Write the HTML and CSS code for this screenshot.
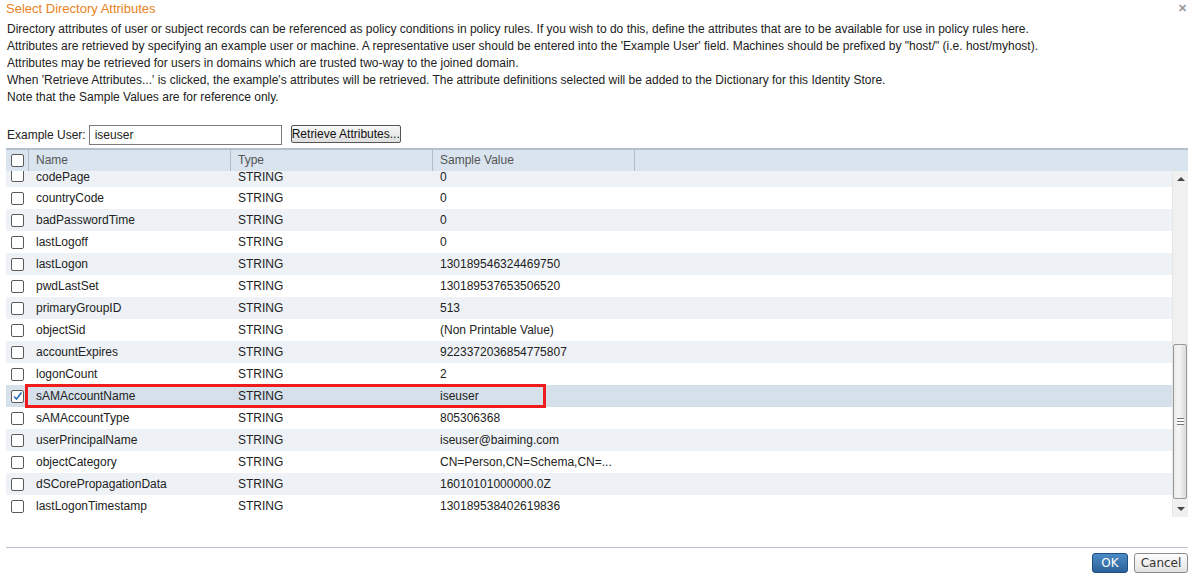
FILE: index.html
```html
<!DOCTYPE html>
<html lang="en">
<head>
	<meta charset="UTF-8">
	<title>Select Directory Attributes</title>
	<link rel="stylesheet" href="styles.css">
</head>
<body>
	<div class="dialog">
		<div class="title-bar">
			<span class="title">Select Directory Attributes</span>
			<span class="close">&#10005;</span>
		</div>

		<div class="desc">
			<p>Directory attributes of user or subject records can be referenced as policy conditions in policy rules. If you wish to do this, define the attributes that are to be available for use in policy rules here.</p>
			<p>Attributes are retrieved by specifying an example user or machine. A representative user should be entered into the 'Example User' field. Machines should be prefixed by "host/" (i.e. host/myhost).</p>
			<p>Attributes may be retrieved for users in domains which are trusted two-way to the joined domain.</p>
			<p>When 'Retrieve Attributes...' is clicked, the example's attributes will be retrieved. The attribute definitions selected will be added to the Dictionary for this Identity Store.</p>
			<p>Note that the Sample Values are for reference only.</p>
		</div>

		<div class="example">
			<span class="lbl">Example User:</span>
			<input class="user-input" type="text" value="iseuser">
			<button class="btn-retrieve">Retrieve Attributes...</button>
		</div>

		<div class="grid">
			<div class="grid-head">
				<div class="c c-chk"><span class="chk"></span></div>
				<div class="c c-name">Name</div>
				<div class="c c-type">Type</div>
				<div class="c c-val">Sample Value</div>
				<div class="c c-rest"></div>
			</div>
			<div class="grid-body">
				<div class="rows">
					<!-- list is scrolled a few px, first row shows cut -->
					<div class="row alt partial"><div class="c c-chk"><span class="chk"></span></div><div class="c c-name">codePage</div><div class="c c-type">STRING</div><div class="c c-val">0</div></div>
					<div class="row"><div class="c c-chk"><span class="chk"></span></div><div class="c c-name">countryCode</div><div class="c c-type">STRING</div><div class="c c-val">0</div></div>
					<div class="row alt"><div class="c c-chk"><span class="chk"></span></div><div class="c c-name">badPasswordTime</div><div class="c c-type">STRING</div><div class="c c-val">0</div></div>
					<div class="row"><div class="c c-chk"><span class="chk"></span></div><div class="c c-name">lastLogoff</div><div class="c c-type">STRING</div><div class="c c-val">0</div></div>
					<div class="row alt"><div class="c c-chk"><span class="chk"></span></div><div class="c c-name">lastLogon</div><div class="c c-type">STRING</div><div class="c c-val">130189546324469750</div></div>
					<div class="row"><div class="c c-chk"><span class="chk"></span></div><div class="c c-name">pwdLastSet</div><div class="c c-type">STRING</div><div class="c c-val">130189537653506520</div></div>
					<div class="row alt"><div class="c c-chk"><span class="chk"></span></div><div class="c c-name">primaryGroupID</div><div class="c c-type">STRING</div><div class="c c-val">513</div></div>
					<div class="row"><div class="c c-chk"><span class="chk"></span></div><div class="c c-name">objectSid</div><div class="c c-type">STRING</div><div class="c c-val">(Non Printable Value)</div></div>
					<div class="row alt"><div class="c c-chk"><span class="chk"></span></div><div class="c c-name">accountExpires</div><div class="c c-type">STRING</div><div class="c c-val">9223372036854775807</div></div>
					<div class="row"><div class="c c-chk"><span class="chk"></span></div><div class="c c-name">logonCount</div><div class="c c-type">STRING</div><div class="c c-val">2</div></div>
					<div class="row sel">
						<div class="c c-chk"><span class="chk"><svg width="11" height="11" viewBox="0 0 11 11"><path d="M2 5.5 L4.5 8 L9.5 1.5" fill="none" stroke="#2a6fb8" stroke-width="1.6"/></svg></span></div>
						<div class="c c-name">sAMAccountName</div><div class="c c-type">STRING</div><div class="c c-val">iseuser</div>
						<div class="mark"></div>
					</div>
					<div class="row"><div class="c c-chk"><span class="chk"></span></div><div class="c c-name">sAMAccountType</div><div class="c c-type">STRING</div><div class="c c-val">805306368</div></div>
					<div class="row alt"><div class="c c-chk"><span class="chk"></span></div><div class="c c-name">userPrincipalName</div><div class="c c-type">STRING</div><div class="c c-val">iseuser@baiming.com</div></div>
					<div class="row"><div class="c c-chk"><span class="chk"></span></div><div class="c c-name">objectCategory</div><div class="c c-type">STRING</div><div class="c c-val">CN=Person,CN=Schema,CN=...</div></div>
					<div class="row alt"><div class="c c-chk"><span class="chk"></span></div><div class="c c-name">dSCorePropagationData</div><div class="c c-type">STRING</div><div class="c c-val">16010101000000.0Z</div></div>
					<div class="row"><div class="c c-chk"><span class="chk"></span></div><div class="c c-name">lastLogonTimestamp</div><div class="c c-type">STRING</div><div class="c c-val">130189538402619836</div></div>
				</div>
				<div class="vscroll">
					<div class="arrow up"></div>
					<div class="track">
						<div class="thumb"><span class="grip"></span></div>
					</div>
					<div class="arrow down"></div>
				</div>
			</div>
		</div>

		<div class="footer">
			<button class="btn-ok">OK</button>
			<button class="btn-cancel">Cancel</button>
		</div>
	</div>
</body>
</html>
```

FILE: styles.css
```css
* {
	margin: 0;
	padding: 0;
	box-sizing: border-box;
}
body {
	font-family: "Liberation Sans", Arial, sans-serif;
	font-size: 12px;
	color: #222;
	background: #fff;
}
.dialog {
	width: 1192px;
	height: 579px;
	padding: 0 4px 0 6px;
}
.title-bar {
	display: flex;
	justify-content: space-between;
	align-items: center;
	height: 17px;
}
.title {
	color: #e8821e;
	font-size: 13px;
}
.close {
	color: #999;
	font-size: 11px;
	font-weight: bold;
	margin-right: 1px;
}
.desc {
	margin-top: 4px;
	padding-left: 1px;
}
.desc p {
	line-height: 17px;
}
.example {
	display: flex;
	align-items: flex-start;
	margin-top: 19px;
	height: 20px;
}
.lbl {
	line-height: 20px;
	margin-right: 3px;
	padding-left: 1px;
}
.user-input {
	width: 193px;
	height: 20px;
	border: 1px solid #7a7a7a;
	padding-left: 5px;
	font-family: inherit;
	font-size: 12px;
	color: #222;
}
.btn-retrieve {
	margin-left: 9px;
	width: 110px;
	height: 18px;
	padding: 0;
	white-space: nowrap;
	border: 1px solid #555;
	border-radius: 2px;
	background: linear-gradient(#f8f8f8, #dedede);
	font-family: inherit;
	font-size: 12px;
	color: #111;
}
.grid {
	margin-top: 3px;
}
.grid-head {
	display: flex;
	height: 23px;
	border-top: 2px solid #b3bfcb;
	background: #d9e4ef;
	color: #555;
}
.c {
	flex: none;
	padding-left: 7px;
	line-height: 21px;
	white-space: nowrap;
	overflow: hidden;
}
.c-chk {
	width: 23px;
	padding-left: 5px;
	display: flex;
	align-items: center;
}
.c-name, .c-type, .c-val {
	width: 202px;
}
.c-rest {
	flex: 1;
}
.grid-head .c {
	border-right: 1px solid #aebdcb;
}
.grid-head .c-rest {
	border-right: none;
}
.chk {
	display: inline-block;
	width: 13px;
	height: 13px;
	border: 1px solid #5a5a5a;
	border-radius: 2px;
	background: #fff;
	position: relative;
}
.chk svg {
	position: absolute;
	left: 0;
	top: 0;
}
.grid-body {
	display: flex;
	height: 346px;
}
.rows {
	flex: 1;
	overflow: hidden;
}
.row {
	display: flex;
	height: 22px;
	position: relative;
}
.row .c {
	line-height: 22px;
	color: #222;
}
.row.partial {
	height: 16px;
	overflow: hidden;
}
.row.partial .c {
	line-height: 12px;
}
.row.partial .c-chk {
	align-items: flex-start;
}
.row.partial .chk {
	margin-top: -2px;
}
.row.alt {
	background: #eef2f6;
}
.row.sel {
	background: #d5e0ea;
}
.mark {
	position: absolute;
	left: 19px;
	top: -1px;
	width: 521px;
	height: 24px;
	border: 3px solid #ee1c1c;
}
.vscroll {
	width: 16px;
	display: flex;
	flex-direction: column;
	background: #f0f0f0;
	border-left: 1px solid #e6e6e6;
}
.arrow {
	height: 16px;
	position: relative;
}
.arrow::after {
	content: "";
	position: absolute;
	left: 4px;
	top: 6px;
	border-left: 4px solid transparent;
	border-right: 4px solid transparent;
}
.arrow.up::after {
	border-bottom: 4px solid #444;
}
.arrow.down::after {
	border-top: 4px solid #444;
}
.track {
	flex: 1;
	display: flex;
	flex-direction: column;
	justify-content: flex-end;
	padding-bottom: 2px;
}
.thumb {
	height: 155px;
	width: 14px;
	border: 1px solid #999;
	border-radius: 2px;
	background: linear-gradient(to right, #e9e9e9, #f6f6f6 40%, #d9d9d9);
	display: flex;
	align-items: center;
	justify-content: center;
}
.grip {
	display: block;
	width: 7px;
	height: 7px;
	border-top: 1px solid #777;
	border-bottom: 1px solid #777;
	background: linear-gradient(#fff 2px, #777 2px, #777 3px, #fff 3px);
}
.footer {
	margin-top: 30px;
	border-top: 1px solid #b9c1cd;
	display: flex;
	justify-content: flex-end;
	gap: 6px;
	padding-top: 5px;
}
.btn-ok {
	width: 36px;
	height: 20px;
	border: 1px solid #1f4f80;
	border-radius: 3px;
	background: linear-gradient(#4d8bc6, #2b6199);
	color: #fff;
	font-family: "DejaVu Sans", sans-serif;
	font-size: 12px;
}
.btn-cancel {
	width: 54px;
	height: 20px;
	border: 1px solid #8c8c8c;
	border-radius: 3px;
	background: linear-gradient(#fdfdfd, #e2e2e2);
	color: #333;
	font-family: "DejaVu Sans", sans-serif;
	font-size: 12px;
}
```
